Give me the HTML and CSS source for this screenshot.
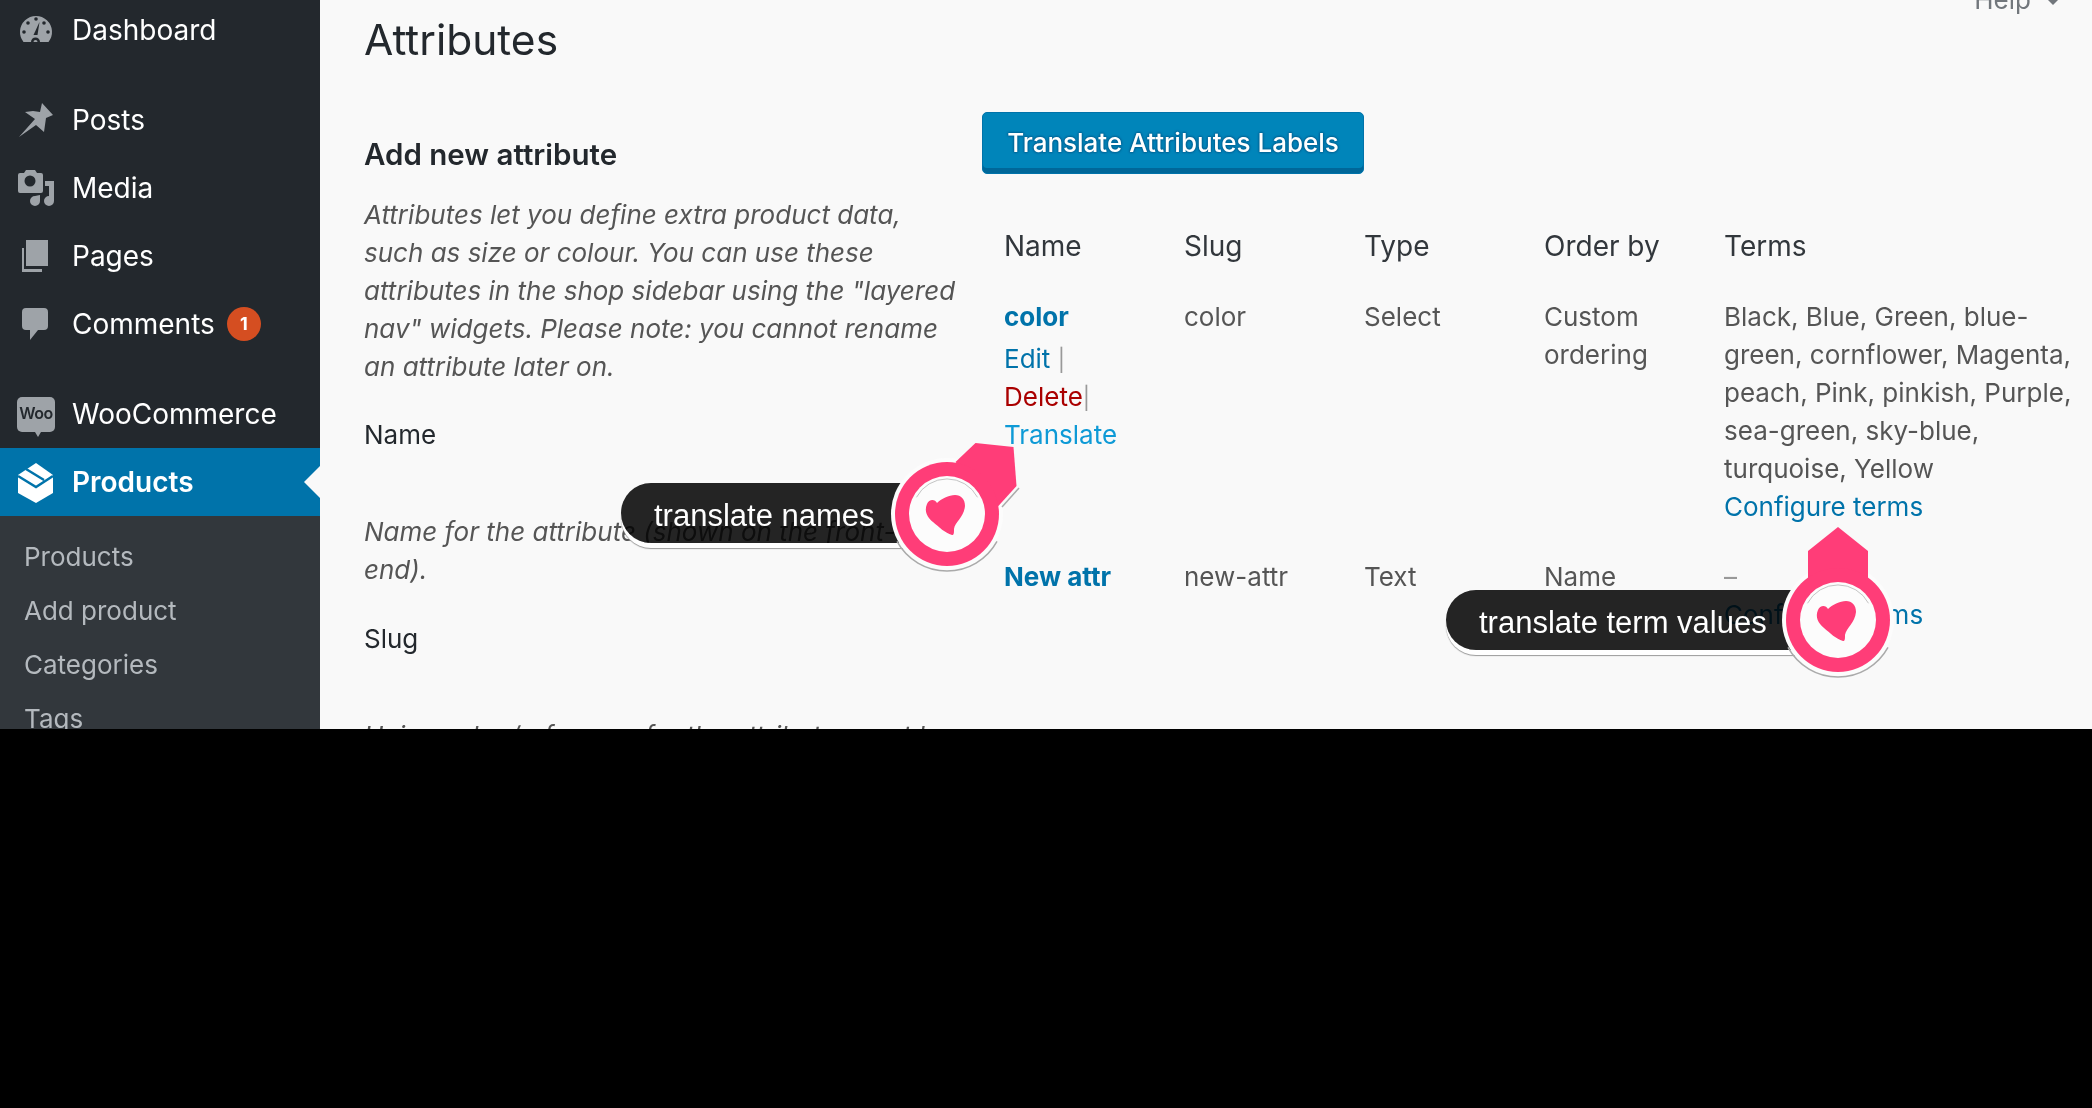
FILE: index.html
```html
<!DOCTYPE html>
<html lang="en">
<head>
    <meta charset="UTF-8">
    <meta name="viewport" content="width=device-width, initial-scale=1.0">
    <title>Attributes</title>
    <link rel="stylesheet" href="styles.css">
</head>
<body>
    <div class="screen">
        <nav class="sidebar">
            <ul class="menu">
                <li class="menu-item">
                    <svg class="menu-icon" viewBox="0 0 40 40">
                        <path class="ico" d="M7.5 32A16 16 0 1 1 32.5 32Z"/>
                        <g class="ico-cut"><circle cx="12" cy="13" r="1.8"/><circle cx="20" cy="9" r="1.8"/><circle cx="28" cy="13" r="1.8"/><circle cx="32" cy="22" r="1.8"/><circle cx="8" cy="22" r="1.8"/><path d="M23.5 12L21.5 25H17.5Z"/><path d="M15 32A4.5 4.5 0 1 1 24 32Z"/></g>
                        <path class="ico" d="M17.5 32A2 2 0 1 1 21.5 32Z"/>
                    </svg>
                    Dashboard
                </li>
                <li class="menu-item menu-gap">
                    <svg class="menu-icon" viewBox="0 0 40 40"><path class="ico" d="M3 37L19 19L9 12L17 11L24 12L26 3L37 15L30 18L29 25L28 32L20 25Z"/></svg>
                    Posts
                </li>
                <li class="menu-item">
                    <svg class="menu-icon" viewBox="0 0 40 40">
                        <path class="ico" d="M4 5H8L10 2H19L21 5H25Q27 5 27 7V23Q27 25 25 25H4Q2 25 2 23V7Q2 5 4 5Z"/>
                        <circle class="ico-cut" cx="14" cy="13" r="5.5"/>
                        <path class="ico" d="M29 13H38V33A5 5 0 1 1 33 28V18H29Z"/>
                        <path class="ico" d="M24 27V33A5 5 0 1 1 19 28Z"/>
                    </svg>
                    Media
                </li>
                <li class="menu-item">
                    <svg class="menu-icon" viewBox="0 0 40 40">
                        <rect class="ico" x="10" y="4" width="22" height="26"/>
                        <path class="ico" d="M6 12H8V33H26V36H6Z"/>
                    </svg>
                    Pages
                </li>
                <li class="menu-item">
                    <svg class="menu-icon" viewBox="0 0 40 40"><path class="ico" d="M10 4H28Q32 4 32 8V22Q32 26 28 26H22L14 36V26H10Q6 26 6 22V8Q6 4 10 4Z"/></svg>
                    Comments
                    <span class="badge">1</span>
                </li>
                <li class="menu-item menu-gap">
                    <span class="woo-icon">Woo</span>
                    WooCommerce
                </li>
                <li class="menu-item active">
                    <svg class="menu-icon" viewBox="0 0 40 40">
                        <path class="ico-white" d="M20 1L37 13V31L20 41L2 31V13Z"/>
                        <path class="ico-line" d="M2 14L20 25L37 14M10 7L28 18"/>
                    </svg>
                    Products
                </li>
            </ul>
            <ul class="submenu">
                <li>Products</li>
                <li>Add product</li>
                <li>Categories</li>
                <li>Tags</li>
            </ul>
        </nav>

        <main class="content">
            <div class="help-row"><span class="help">Help</span><span class="help-arrow"></span></div>
            <h1>Attributes</h1>
            <div class="columns">
                <section class="col-form">
                    <h2>Add new attribute</h2>
                    <p class="desc">Attributes let you define extra product data,<br>such as size or colour. You can use these<br>attributes in the shop sidebar using the "layered<br>nav" widgets. Please note: you cannot rename<br>an attribute later on.</p>
                    <label class="field-label">Name</label>
                    <p class="desc hint">Name for the attribute (shown on the front-<br>end).</p>
                    <label class="field-label">Slug</label>
                    <p class="desc hint">Unique slug/reference for the attribute; must be</p>
                </section>
                <section class="col-table">
                    <a class="button">Translate Attributes Labels</a>
                    <table class="attr-table">
                        <thead>
                            <tr><th>Name</th><th>Slug</th><th>Type</th><th>Order by</th><th class="terms-col">Terms</th></tr>
                        </thead>
                        <tbody>
                            <tr>
                                <td>
                                    <a class="attr-name">color</a>
                                    <a class="link">Edit</a> <span class="sep">|</span><br>
                                    <a class="link-delete">Delete</a><span class="sep">|</span><br>
                                    <a class="link-translate">Translate</a>
                                </td>
                                <td>color</td>
                                <td>Select</td>
                                <td>Custom<br>ordering</td>
                                <td>Black, Blue, Green, blue-<br>green, cornflower, Magenta,<br>peach, Pink, pinkish, Purple,<br>sea-green, sky-blue,<br>turquoise, Yellow<br><a class="link">Configure terms</a></td>
                            </tr>
                            <tr>
                                <td><a class="attr-name">New attr</a></td>
                                <td>new-attr</td>
                                <td>Text</td>
                                <td>Name</td>
                                <td><span class="dash">–</span><br><a class="link">Configure terms</a></td>
                            </tr>
                        </tbody>
                    </table>
                </section>
            </div>
        </main>

        <!-- callouts sit over the page -->
        <div class="pill pill-names"><span>translate names</span></div>
        <svg class="pin pin-names" viewBox="-80 -100 160 170">
            <circle class="pin-ring" r="56"/>
            <path class="pin-shadow" d="M55 -7L72 -26"/>
            <path class="pin-shadow" d="M-50 27.4A57 57 0 0 0 50 27.4"/>
            <path class="pin-pink" d="M8.5 -52L28.5 -71L66.5 -67L69.5 -28L50.5 -7Z"/>
            <circle class="pin-pink" r="52"/>
            <circle class="pin-ring" r="38"/>
            <path class="pin-arc" d="M-30.5 -16.7A34.5 34.5 0 0 1 30.5 -16.7"/>
            <path class="pin-pink" d="M-10 -11C-12 -15 -18 -15 -20 -10C-23 -3 -20 3 -14 8C-8 13 -2 19 5 21C7 21 7 19 7 15C8 8 17 3 18 -8C18 -15 14 -19 8 -19C2 -19 -6 -15 -10 -11Z"/>
        </svg>

        <div class="pill pill-terms"><span>translate term values</span></div>
        <svg class="pin pin-terms" viewBox="-80 -100 160 170">
            <circle class="pin-ring" r="56"/>
            <path class="pin-shadow" d="M-50 27.4A57 57 0 0 0 50 27.4"/>
            <path class="pin-pink" d="M-30 -69L0 -93L30 -69V-30H-30Z"/>
            <circle class="pin-pink" r="52"/>
            <circle class="pin-ring" r="38"/>
            <path class="pin-arc" d="M-30.5 -16.7A34.5 34.5 0 0 1 30.5 -16.7"/>
            <path class="pin-pink" d="M-10 -11C-12 -15 -18 -15 -20 -10C-23 -3 -20 3 -14 8C-8 13 -2 19 5 21C7 21 7 19 7 15C8 8 17 3 18 -8C18 -15 14 -19 8 -19C2 -19 -6 -15 -10 -11Z"/>
        </svg>
    </div>
</body>
</html>
```

FILE: styles.css
```css
html,
body {
    margin: 0;
    padding: 0;
    background: #000;
}

body {
    font-family: Inter, "Noto Sans", sans-serif;
    font-size: 26px;
    line-height: 38px;
    color: #555;
}

.screen {
    position: relative;
    display: flex;
    height: 729px;
    overflow: hidden;
    background: #f9f9f9;
}

/* sidebar */
.sidebar {
    width: 320px;
    flex-shrink: 0;
    background: #23282d;
}

.menu,
.submenu {
    list-style: none;
    margin: 0;
    padding: 0;
}

.menu {
    margin-top: -4px;
}

.menu-item {
    display: flex;
    align-items: center;
    height: 68px;
    color: #fff;
    font-size: 28px;
}

.menu-gap {
    margin-top: 22px;
}

.menu-icon {
    width: 40px;
    height: 40px;
    margin: 0 16px 0 16px;
    flex-shrink: 0;
    overflow: visible;
}

.ico {
    fill: #9ea3a8;
}

.ico-cut {
    fill: #23282d;
}

.ico-white {
    fill: #fff;
}

.ico-line {
    fill: none;
    stroke: #0073aa;
    stroke-width: 2.5;
}

.badge {
    display: flex;
    align-items: center;
    justify-content: center;
    width: 34px;
    height: 34px;
    margin-left: 12px;
    border-radius: 50%;
    background: #d54e21;
    color: #fff;
    font-size: 18px;
    font-weight: 700;
}

.woo-icon {
    position: relative;
    display: block;
    width: 38px;
    height: 35px;
    margin: 0 17px 0 17px;
    border-radius: 5px;
    background: #9ea3a8;
    color: #23282d;
    font-size: 16px;
    line-height: 33px;
    font-weight: 600;
    text-align: center;
    letter-spacing: -0.5px;
}

.woo-icon::after {
    content: "";
    position: absolute;
    left: 18px;
    top: 35px;
    border-top: 5px solid #9ea3a8;
    border-left: 3px solid transparent;
    border-right: 3px solid transparent;
}

.active {
    position: relative;
    background: #0073aa;
    font-weight: 600;
}

.active::after {
    content: "";
    position: absolute;
    right: 0;
    top: 18px;
    border-top: 16px solid transparent;
    border-bottom: 16px solid transparent;
    border-right: 16px solid #f9f9f9;
}

.submenu {
    background: #32373c;
    padding-top: 14px;
    height: 240px;
    color: #b4b9be;
}

.submenu li {
    height: 54px;
    line-height: 54px;
    padding-left: 24px;
}

/* main area */
.content {
    flex: 1;
    padding: 0 34px 0 44px;
}

.help-row {
    display: flex;
    justify-content: flex-end;
    align-items: flex-start;
    gap: 17px;
    margin-top: -19px;
    height: 38px;
    color: #72777c;
}

.help-arrow {
    margin-top: 19px;
    border-top: 5px solid #72777c;
    border-left: 5px solid transparent;
    border-right: 5px solid transparent;
}

h1 {
    margin: -8px 0 0;
    font-size: 42.5px;
    line-height: 58px;
    font-weight: 400;
    color: #23282d;
}

.columns {
    display: flex;
    margin-top: 43px;
}

.col-form {
    width: 618px;
    flex-shrink: 0;
    padding-top: 23px;
}

h2 {
    margin: 0 0 23px;
    font-size: 29.5px;
    line-height: 38px;
    font-weight: 600;
    color: #23282d;
}

.desc {
    margin: 0 0 30px;
    font-style: italic;
}

.hint {
    margin-bottom: 31px;
}

.field-label {
    display: block;
    margin-bottom: 59px;
    color: #23282d;
}

.button {
    display: inline-block;
    box-sizing: border-box;
    width: 382px;
    height: 62px;
    border: 1px solid #0073aa;
    border-radius: 5px;
    background: #0085ba;
    box-shadow: inset 0 -5px 0 #006799;
    color: #fff;
    font-weight: 500;
    line-height: 60px;
    text-align: center;
    text-shadow: 0 -1px 2px #006799, 1px 0 2px #006799, 0 1px 2px #006799, -1px 0 2px #006799;
}

.attr-table {
    table-layout: fixed;
    width: 1060px;
    margin: 38px 0 0 2px;
    border-collapse: collapse;
}

.attr-table th,
.attr-table td {
    width: 140px;
    padding: 16px 20px;
    vertical-align: top;
    text-align: left;
    font-weight: 400;
    white-space: nowrap;
}

.attr-table th {
    padding-top: 15px;
    padding-bottom: 17px;
    color: #32373c;
    font-size: 28px;
}

.attr-table .terms-col {
    width: 300px;
}

.attr-name {
    display: block;
    margin-bottom: 4px;
    font-weight: 700;
    color: #0073aa;
}

.link {
    color: #0073aa;
}

.link-delete {
    color: #a00;
}

.link-translate {
    color: #0e9ad6;
}

.sep {
    color: #999;
    font-size: 22px;
    line-height: 1;
}

.dash {
    color: #999;
}

/* callouts */
.pill {
    position: absolute;
    box-sizing: border-box;
    height: 60px;
    border-radius: 30px;
    padding-left: 33px;
    box-shadow: 0 5px 0 #fff, 0 6px 1px #999;
    color: #fff;
    font-family: "Liberation Sans", Arial, sans-serif;
    font-size: 31px;
    line-height: 66px;
}

/* multiply so the text under the pill still shows through */
.pill::before {
    content: "";
    position: absolute;
    inset: 0;
    border-radius: 30px;
    background: #252525;
    mix-blend-mode: multiply;
}

.pill span {
    position: relative;
}

.pill-names {
    left: 621px;
    top: 483px;
    width: 320px;
}

.pill-terms {
    left: 1446px;
    top: 590px;
    width: 380px;
}

.pin {
    position: absolute;
    width: 160px;
    height: 170px;
}

.pin-names {
    left: 866.5px;
    top: 414px;
}

.pin-terms {
    left: 1758px;
    top: 520px;
}

.pin-pink {
    fill: #ff3d78;
}

.pin-ring {
    fill: #fcfcfc;
}

.pin-shadow {
    fill: none;
    stroke: #aaa;
    stroke-width: 1.5;
}

.pin-arc {
    fill: none;
    stroke: #c4c4c4;
    stroke-width: 1;
}
```
